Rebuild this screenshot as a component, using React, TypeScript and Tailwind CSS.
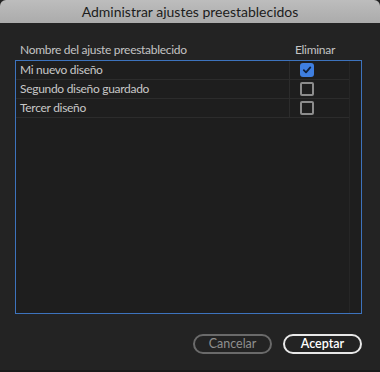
import React from 'react';

const presets = [
  { name: 'Mi nuevo diseño', remove: true },
  { name: 'Segundo diseño guardado', remove: false },
  { name: 'Tercer diseño', remove: false },
];

const Check = ({ on }: { on: boolean }) =>
  on ? (
    <div className="w-[14px] h-[14px] rounded-[3px] bg-[#3f7fe0] flex items-center justify-center">
      <svg width="10" height="10" viewBox="0 0 10 10">
        <path d="M1.8 5.2 L4 7.4 L8.3 2.4" fill="none" stroke="#10203a" strokeWidth="1.8" strokeLinecap="round" strokeLinejoin="round" />
      </svg>
    </div>
  ) : (
    <div className="w-[14px] h-[14px] rounded-[2px] border-2 border-[#8c8c8c]" />
  );

export default function App() {
  return (
    <div className="w-[380px] h-[372px] bg-[#232323] flex flex-col text-[#c9c9c9]" style={{ fontFamily: 'Lato, "Noto Sans", sans-serif' }}>
      {/* title bar */}
      <div className="h-[23px] shrink-0 rounded-t-[6px] bg-gradient-to-b from-[#bdbdbd] to-[#ababab] flex items-center justify-center text-[14px] text-[#1c1c1c]">
        Administrar ajustes preestablecidos
      </div>

      <div className="flex-1 flex flex-col pl-[15px] pr-[18px] pt-[17px] pb-[16px] border-b-2 border-[#1a1a1a]">
        <div className="flex text-[12px] tracking-[-0.3px] h-[20px] items-center text-[#c4c4c4]">
          <div className="w-[275px] pl-[5px]">Nombre del ajuste preestablecido</div>
          <div className="pl-[5px]">Eliminar</div>
        </div>

        {/* list */}
        <div className="h-[254px] border border-[#3d73bd] bg-[#1e1e1e] flex">
          <div className="w-[334px] border-r border-[#262626]">
            {presets.map((p) => (
              <div key={p.name} className="flex h-[19px] border-b border-[#2c2c2c] text-[12px] tracking-[-0.3px] text-[#c8c8c8]">
                <div className="w-[274px] pl-[4px] flex items-center border-r border-[#2c2c2c]">{p.name}</div>
                <div className="flex-1 flex items-center pl-[10px]">
                  <Check on={p.remove} />
                </div>
              </div>
            ))}
          </div>
        </div>

        <div className="flex-1" />

        <div className="flex justify-end gap-[11px]">
          <button className="w-[79px] h-[20px] rounded-full border-2 border-[#6a6a6a] text-[12.5px] text-[#8f8f8f] flex items-center justify-center">
            Cancelar
          </button>
          <button className="w-[79px] h-[20px] rounded-full border-2 border-[#e8e8e8] text-[12.5px] font-semibold text-white flex items-center justify-center">
            Aceptar
          </button>
        </div>
      </div>
    </div>
  );
}
